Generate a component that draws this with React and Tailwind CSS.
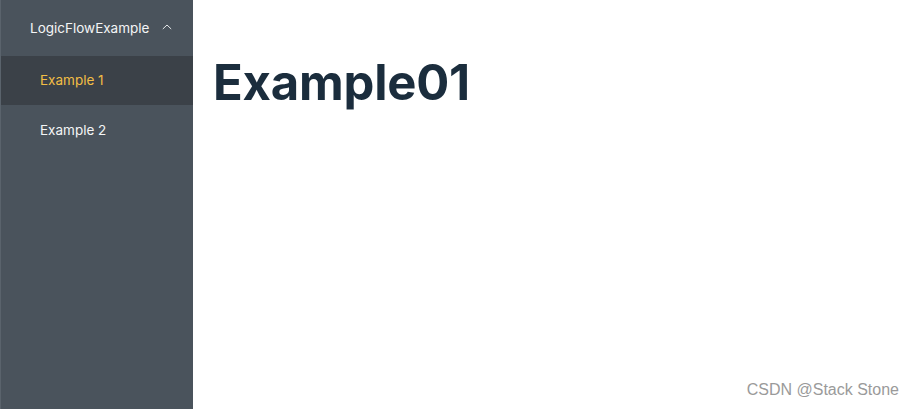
import React from 'react';

export default function App() {
  return (
    <div className="relative flex h-[409px] w-[914px] bg-white font-['Inter',sans-serif]">
      {/* Sidebar */}
      <aside className="w-[193px] shrink-0 border-l border-[#5a636c] bg-[#4a535c] text-[13.5px]">
        <div className="flex h-[56px] items-center justify-between pl-[29px] pr-[21px] text-[#f4f5f6]">
          <span>LogicFlowExample</span>
          <svg width="10" height="10" viewBox="0 0 10 10" fill="none" stroke="#e6e8ea" strokeWidth="1" className="mb-[2px]">
            <path d="M0.8 7 L5 3 L9.2 7" />
          </svg>
        </div>
        <div className="flex h-[49px] items-center bg-[#3b4148] pl-[39px] text-[#f2be45]">Example 1</div>
        <div className="flex h-[50px] items-center pl-[39px] text-[#f4f5f6]">Example 2</div>
      </aside>

      {/* Main */}
      <main className="flex-1 pl-[20px] pt-[51px]">
        <h1 className="text-[49px] font-bold leading-[64px] tracking-[-0.2px] text-[#1b2d3d]">Example01</h1>
      </main>

      <span className="absolute bottom-[7px] right-[15px] font-['Liberation_Sans',sans-serif] text-[16px] text-[#9a9a9a]">
        CSDN @Stack Stone
      </span>
    </div>
  );
}
